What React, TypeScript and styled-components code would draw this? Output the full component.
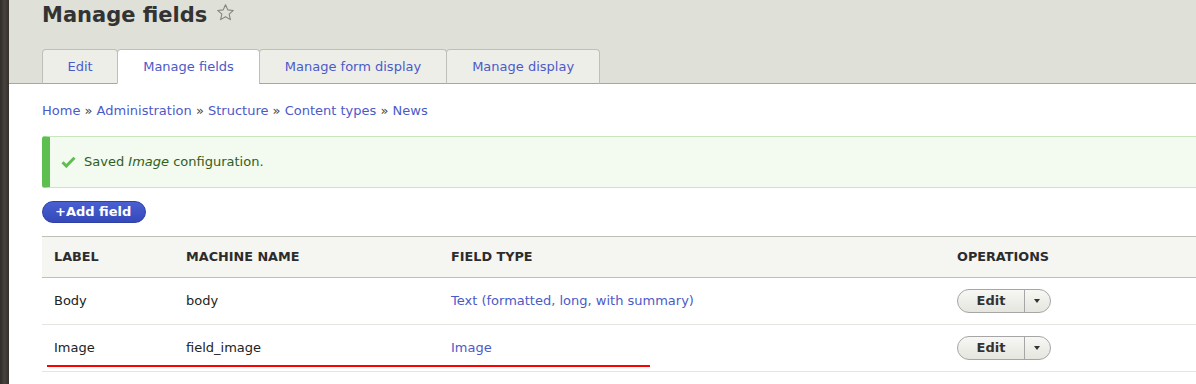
import React from 'react';
import styled, { createGlobalStyle } from 'styled-components';

const GlobalStyle = createGlobalStyle`
  html, body { margin: 0; padding: 0; }
  body {
    font-family: "DejaVu Sans", Verdana, sans-serif;
    font-size: 13px;
    color: #222;
    background: #fff;
    overflow: hidden;
  }
  * { box-sizing: border-box; }
`;

const LINK = '#4b5ac8';

const Page = styled.div`
  display: flex;
  min-height: 100vh;
`;

const Strip = styled.div`
  flex: 0 0 9px;
  background: linear-gradient(90deg, #2f2c29, #47423c 50%, #34302c);
`;

const Main = styled.div`
  flex: 1;
  min-width: 0;
  overflow: hidden;
  background: #fff;
`;

const Header = styled.header`
  background: #dfe0d7;
  border-bottom: 1px solid #a6a6a6;
  padding: 0 0 0 33px;
`;

const TitleRow = styled.div`
  display: flex;
  align-items: flex-start;
  height: 49px;
`;

const Title = styled.h1`
  margin: 0;
  padding-top: 2px;
  font-size: 21px;
  line-height: 26px;
  font-weight: bold;
  color: #333;
`;

const Star = styled.svg`
  margin: 3px 0 0 9px;
  flex: none;
`;

const Tabs = styled.ul`
  display: flex;
  list-style: none;
  margin: 0 0 -1px;
  padding: 0;
`;

const Tab = styled.li<{ $active?: boolean }>`
  height: 35px;
  padding: 0 25px;
  line-height: 33px;
  border: 1px solid #bfbfba;
  border-bottom-color: ${(p) => (p.$active ? '#fff' : '#a6a6a6')};
  border-radius: 4px 4px 0 0;
  background: ${(p) => (p.$active ? '#fff' : '#eeeee8')};
  color: ${LINK};
  & + & { margin-left: -1px; }
  &:first-child { padding: 0 24.5px; }
`;

const Content = styled.div`
  display: flex;
  flex-direction: column;
  padding: 18px 0 0 33px;
`;

const Breadcrumb = styled.nav`
  line-height: 18px;
  color: #444;
`;

const Crumb = styled.a`
  color: ${LINK};
  text-decoration: none;
`;

const Message = styled.div`
  display: flex;
  align-items: center;
  gap: 8px;
  margin: 16px -20px 0 0;
  padding: 16px 11px;
  line-height: 18px;
  background: #f3faef;
  border: 1px solid #c9e6bf;
  border-left: 8px solid #5cbf50;
  border-radius: 3px;
  color: #325e1c;
`;

const AddButton = styled.button`
  align-self: flex-start;
  margin-top: 13px;
  height: 22px;
  padding: 0 14px 0 12px;
  border-radius: 12px;
  border: 1px solid #2f40a6;
  background: linear-gradient(#4960d2, #3549b9);
  color: #fff;
  font-family: inherit;
  font-size: 13px;
  font-weight: bold;
  line-height: 20px;
`;

const TableWrap = styled.div`
  position: relative;
  margin: 13px -20px 0 0;
`;

const Table = styled.table`
  width: 100%;
  border-collapse: collapse;
  table-layout: fixed;
`;

const Th = styled.th`
  text-align: left;
  padding: 11px 12px;
  line-height: 18px;
  background: #f5f5f2;
  border-top: 1px solid #bfbfba;
  border-bottom: 1px solid #bfbfba;
  font-size: 12.8px;
  font-weight: bold;
  text-transform: uppercase;
  color: #2c2c2c;
`;

const Td = styled.td<{ $ops?: boolean }>`
  padding: ${(p) => (p.$ops ? '11px 12px' : '14px 12px')};
  line-height: 18px;
  border-bottom: 1px solid #e6e4df;
  color: #222;
`;

const TypeLink = styled.a`
  color: ${LINK};
  text-decoration: none;
`;

const Dropbutton = styled.div`
  display: inline-flex;
  vertical-align: middle;
  height: 24px;
  border: 1px solid #a6a6a6;
  border-radius: 12px;
  background: linear-gradient(#f7f7f4, #e6e6df);
  overflow: hidden;
`;

const DropMain = styled.span`
  width: 67px;
  text-align: center;
  line-height: 22px;
  font-weight: bold;
  color: #333;
  border-right: 1px solid #a6a6a6;
`;

const DropToggle = styled.span`
  width: 25px;
  display: flex;
  align-items: center;
  justify-content: center;
  &::after {
    content: '';
    border-left: 3.5px solid transparent;
    border-right: 3.5px solid transparent;
    border-top: 4px solid #333;
    margin-left: -2px;
  }
`;

const RedMark = styled.div`
  position: absolute;
  left: 5px;
  top: 129px;
  width: 603px;
  height: 2px;
  background: #f00;
`;

const rows = [
  { label: 'Body', machine: 'body', type: 'Text (formatted, long, with summary)' },
  { label: 'Image', machine: 'field_image', type: 'Image' },
];

const crumbs = ['Home', 'Administration', 'Structure', 'Content types', 'News'];

export default function App() {
  return (
    <>
      <GlobalStyle />
      <Page>
        <Strip />
        <Main>
          <Header>
            <TitleRow>
              <Title>Manage fields</Title>
              <Star width="19" height="19" viewBox="0 0 24 24">
                <path
                  d="M12 2.2l2.9 6.5 7 .7-5.3 4.7 1.6 6.9L12 17.4 5.8 21l1.6-6.9L2.1 9.4l7-.7z"
                  fill="none"
                  stroke="#85857a"
                  strokeWidth="1.4"
                  strokeLinejoin="round"
                />
              </Star>
            </TitleRow>
            <Tabs>
              <Tab>Edit</Tab>
              <Tab $active>Manage fields</Tab>
              <Tab>Manage form display</Tab>
              <Tab>Manage display</Tab>
            </Tabs>
          </Header>
          <Content>
            <Breadcrumb>
              {crumbs.map((c, i) => (
                <React.Fragment key={c}>
                  {i > 0 && ' » '}
                  <Crumb href="#">{c}</Crumb>
                </React.Fragment>
              ))}
            </Breadcrumb>
            <Message>
              <svg width="15" height="12" viewBox="0 0 15 12">
                <path d="M1.5 6.2l3.8 3.8L13.5 1.8" fill="none" stroke="#5cbf50" strokeWidth="3" />
              </svg>
              <span>
                Saved <em>Image</em> configuration.
              </span>
            </Message>
            <AddButton>+Add field</AddButton>
            <TableWrap>
              <Table>
                <colgroup>
                  <col style={{ width: 132 }} />
                  <col style={{ width: 265 }} />
                  <col style={{ width: 506 }} />
                  <col />
                </colgroup>
                <thead>
                  <tr>
                    <Th>Label</Th>
                    <Th>Machine name</Th>
                    <Th>Field type</Th>
                    <Th>Operations</Th>
                  </tr>
                </thead>
                <tbody>
                  {rows.map((r) => (
                    <tr key={r.machine}>
                      <Td>{r.label}</Td>
                      <Td>{r.machine}</Td>
                      <Td>
                        <TypeLink href="#">{r.type}</TypeLink>
                      </Td>
                      <Td $ops>
                        <Dropbutton>
                          <DropMain>Edit</DropMain>
                          <DropToggle />
                        </Dropbutton>
                      </Td>
                    </tr>
                  ))}
                </tbody>
              </Table>
              <RedMark />
            </TableWrap>
          </Content>
        </Main>
      </Page>
    </>
  );
}
